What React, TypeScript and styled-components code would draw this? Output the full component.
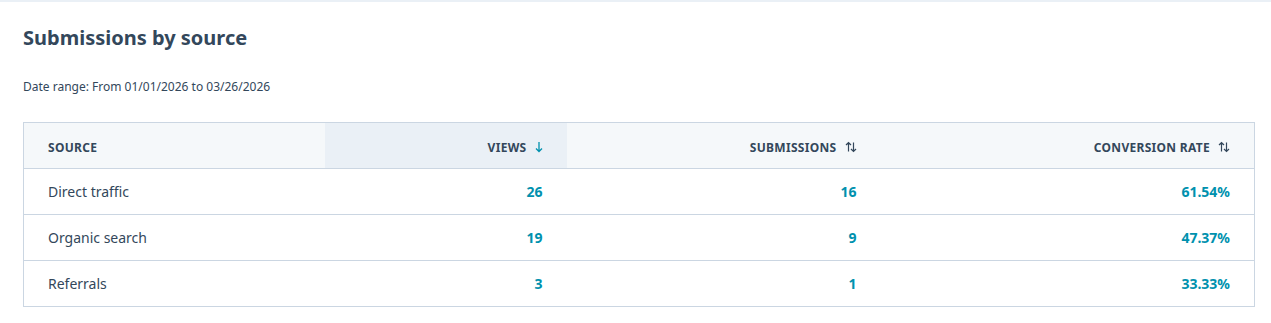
import React, { FC } from 'react'
import styled, { createGlobalStyle } from 'styled-components'

const GlobalStyle = createGlobalStyle`
  body {
    margin: 0;
    background: #ffffff;
    font-family: 'Noto Sans', 'Liberation Sans', sans-serif;
    color: #33475b;
  }
`

const TopStrip = styled.div`
  height: 2px;
  background: #eaf0f6;
`

const Section = styled.section`
  padding: 22px 16px 16px 23px;
`

const Title = styled.h2`
  margin: 0;
  font-size: 20px;
  line-height: 28px;
  font-weight: 700;
  color: #33475b;
`

const DateRange = styled.p`
  margin: 26px 0 0;
  font-size: 12px;
  line-height: 18px;
  color: #33475b;
`

const Table = styled.table`
  margin-top: 26px;
  width: 100%;
  border-collapse: collapse;
  border: 1px solid #cbd6e2;
  table-layout: fixed;
`

const HeadCell = styled.th<{ $width?: number; $active?: boolean; $align?: string }>`
  width: ${(p) => (p.$width ? `${p.$width}px` : 'auto')};
  height: 46px;
  padding: 3px 24px 0;
  box-sizing: border-box;
  background: ${(p) => (p.$active ? '#eaf0f6' : '#f5f8fa')};
  border-bottom: 1px solid #cbd6e2;
  text-align: ${(p) => p.$align || 'right'};
  font-size: 12px;
  font-weight: 700;
  letter-spacing: 0.3px;
  text-transform: uppercase;
  color: #33475b;
  white-space: nowrap;
`

const HeadLabel = styled.span`
  display: inline-flex;
  align-items: center;
  gap: 8px;
`

const Row = styled.tr`
  & + & td {
    border-top: 1px solid #cbd6e2;
  }
`

const Cell = styled.td<{ $numeric?: boolean }>`
  height: 46px;
  padding: 0 24px;
  box-sizing: border-box;
  font-size: 14px;
  text-align: ${(p) => (p.$numeric ? 'right' : 'left')};
  font-weight: ${(p) => (p.$numeric ? 700 : 400)};
  color: ${(p) => (p.$numeric ? '#0091ae' : '#33475b')};
`

type SortState = 'desc' | 'none'

const SortIcon: FC<{ state: SortState }> = ({ state }) =>
  state === 'desc' ? (
    <svg width="8" height="12" viewBox="0 0 8 12" fill="none">
      <path d="M4 1v9.5M1 7.5l3 3 3-3" stroke="#0091ae" strokeWidth="1.3" />
    </svg>
  ) : (
    <svg width="12" height="12" viewBox="0 0 12 12" fill="none">
      <path
        d="M3.5 10.5V1.5M1 4l2.5-2.5L6 4M8.5 1.5v9M6 8l2.5 2.5L11 8"
        stroke="#33475b"
        strokeWidth="1.2"
      />
    </svg>
  )

const rows = [
  { source: 'Direct traffic', views: 26, submissions: 16, rate: '61.54%' },
  { source: 'Organic search', views: 19, submissions: 9, rate: '47.37%' },
  { source: 'Referrals', views: 3, submissions: 1, rate: '33.33%' }
]

const App: FC = () => (
  <>
    <GlobalStyle />
    <TopStrip />
    <Section>
      <Title>Submissions by source</Title>
      <DateRange>Date range: From 01/01/2026 to 03/26/2026</DateRange>
      <Table>
        <thead>
          <tr>
            <HeadCell $width={301} $align="left">
              Source
            </HeadCell>
            <HeadCell $width={242} $active>
              <HeadLabel>
                Views <SortIcon state="desc" />
              </HeadLabel>
            </HeadCell>
            <HeadCell $width={314}>
              <HeadLabel>
                Submissions <SortIcon state="none" />
              </HeadLabel>
            </HeadCell>
            <HeadCell>
              <HeadLabel>
                Conversion rate <SortIcon state="none" />
              </HeadLabel>
            </HeadCell>
          </tr>
        </thead>
        <tbody>
          {rows.map((r) => (
            <Row key={r.source}>
              <Cell>{r.source}</Cell>
              <Cell $numeric>{r.views}</Cell>
              <Cell $numeric>{r.submissions}</Cell>
              <Cell $numeric>{r.rate}</Cell>
            </Row>
          ))}
        </tbody>
      </Table>
    </Section>
  </>
)

export default App
